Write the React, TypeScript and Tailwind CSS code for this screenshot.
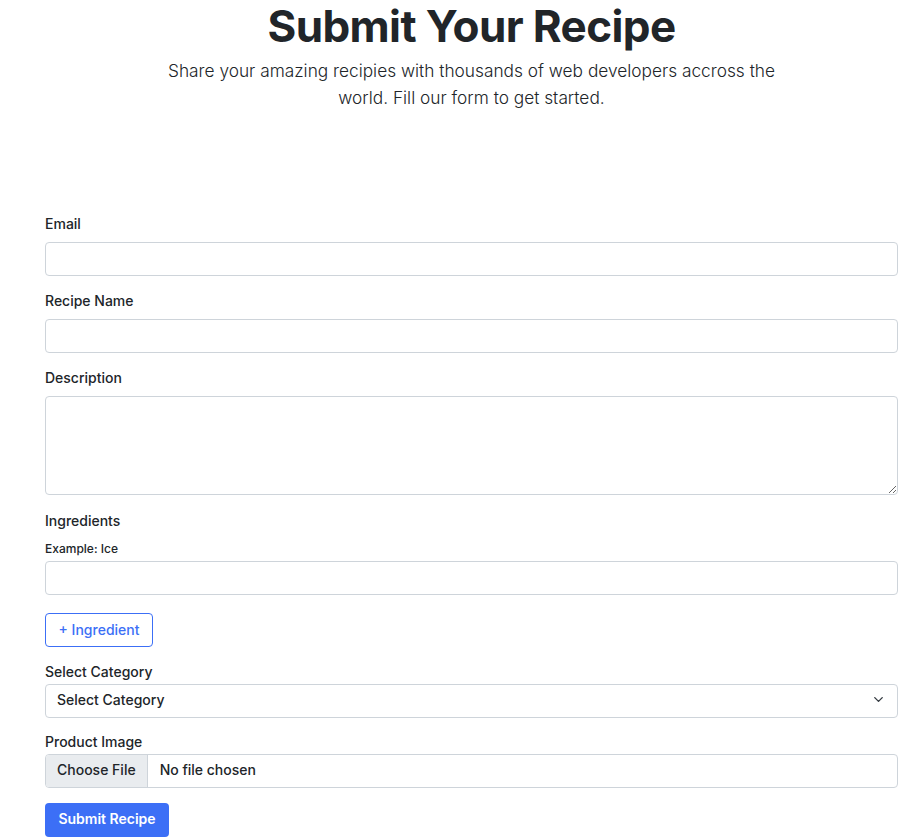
import { ChevronDown } from "lucide-react";

export default function App() {
  return (
    <div className="min-h-screen bg-white text-[#212529] font-['Inter','Noto_Sans',sans-serif]">
      <div className="text-center pl-[24px]">
        <h1 className="text-[44px] leading-[50px] font-bold tracking-[-0.6px] pt-[1px]">Submit Your Recipe</h1>
        <p className="mx-auto mt-[6px] w-[620px] text-[17.3px] leading-[27px] font-light text-[#212529]">
          Share your amazing recipies with thousands of web developers accross the world. Fill our form to get started.
        </p>
      </div>

      <form className="ml-[45px] w-[853px] mt-[103px] text-[14px]">
        <div className="mb-[15px]">
          <label className="block mb-[8px] font-medium leading-[20px]">Email</label>
          <input type="email" className="block w-full h-[34px] rounded-[4px] border border-[#ced4da] px-3" />
        </div>
        <div className="mb-[15px]">
          <label className="block mb-[8px] font-medium leading-[20px]">Recipe Name</label>
          <input type="text" className="block w-full h-[34px] rounded-[4px] border border-[#ced4da] px-3" />
        </div>
        <div className="mb-[16px]">
          <label className="block mb-[8px] font-medium leading-[20px]">Description</label>
          <textarea className="block w-full h-[99px] rounded-[4px] border border-[#ced4da] px-3 py-1.5" />
        </div>
        <div className="mb-[18px]">
          <label className="block mb-[9px] font-medium leading-[20px]">Ingredients</label>
          <div className="text-[12px] leading-[18px] font-medium mb-[3px]">Example: Ice</div>
          <input type="text" className="block w-full h-[34px] rounded-[4px] border border-[#ced4da] px-3" />
        </div>
        <button
          type="button"
          className="h-[34px] w-[108px] pb-[2px] rounded-[4px] border border-[#3c6ff6] text-[#3c6ff6] font-medium text-[14px] mb-[15px]"
        >
          + Ingredient
        </button>
        <div className="mb-[14px]">
          <label className="block font-medium leading-[20px] mb-[2px]">Select Category</label>
          <div className="relative">
            <select className="block w-full h-[34px] pb-[3px] appearance-none rounded-[4px] border border-[#ced4da] pl-[11px] font-medium bg-white">
              <option>Select Category</option>
            </select>
            <ChevronDown size={15} strokeWidth={2.2} className="absolute right-[12px] top-[8px] text-[#343a40] pointer-events-none" />
          </div>
        </div>
        <div className="mb-[15px]">
          <label className="block font-medium leading-[20px] mb-[2px]">Product Image</label>
          <div className="flex h-[34px] w-full rounded-[4px] border border-[#ced4da] overflow-hidden">
            <span className="flex items-center pb-[3px] px-[11px] bg-[#e9ecef] border-r border-[#ced4da] font-medium">Choose File</span>
            <span className="flex items-center pb-[3px] pl-[12px] font-medium">No file chosen</span>
          </div>
        </div>
        <button type="submit" className="h-[34px] w-[124px] pb-[3px] rounded-[4px] bg-[#3c6ff6] text-white font-semibold text-[14px]">
          Submit Recipe
        </button>
      </form>
    </div>
  );
}
